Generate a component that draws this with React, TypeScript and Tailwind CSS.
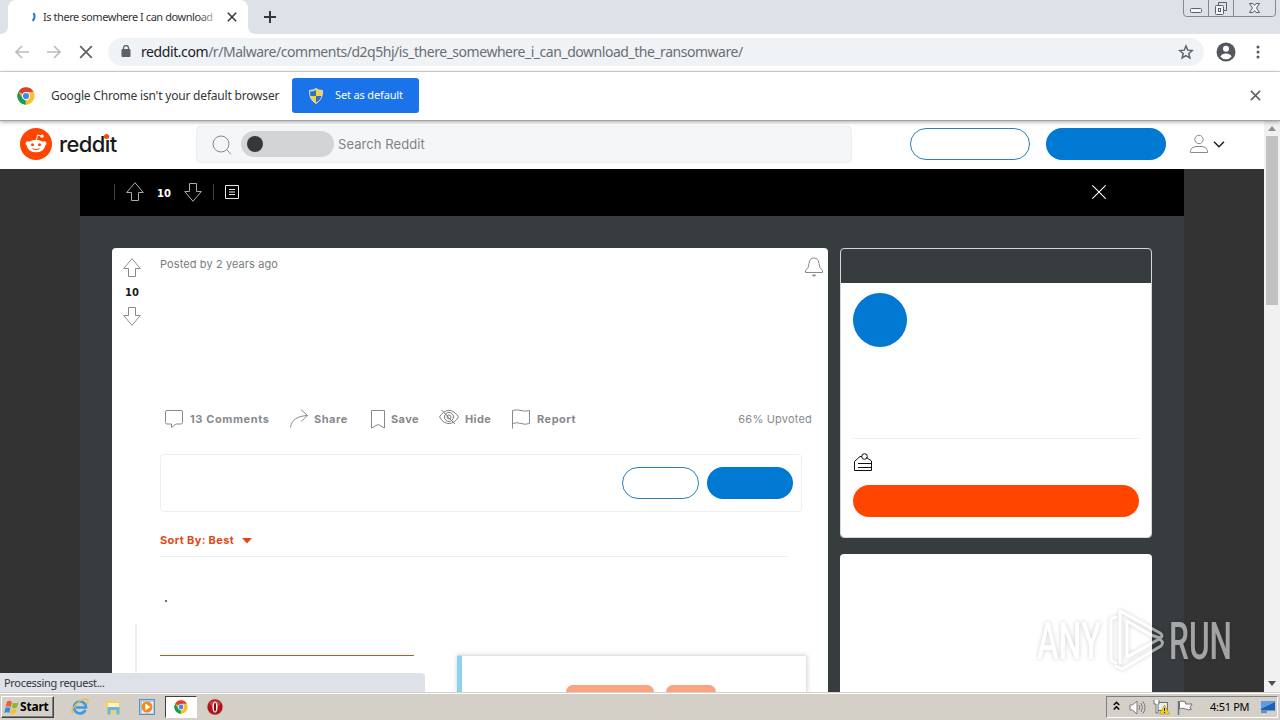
import React from 'react';

type IconProps = { className?: string };

const actions = [
  { id: 'comments', label: '13 Comments', box: 'w-[125px]', gap: 'gap-[7px]', text: 'tracking-[0.6px]', icon: <CommentIcon /> },
  { id: 'share', label: 'Share', box: 'w-[81px]', gap: 'gap-[6px]', text: 'tracking-[0.5px]', icon: <ShareIcon /> },
  { id: 'save', label: 'Save', box: 'w-[68px]', gap: 'gap-[6px]', text: 'tracking-[0.4px]', icon: <SaveIcon /> },
  { id: 'hide', label: 'Hide', box: 'w-[73px]', gap: 'gap-[6px]', text: 'tracking-[0.4px]', icon: <HideIcon /> },
  { id: 'report', label: 'Report', box: 'w-[80px]', gap: 'gap-[7px]', text: 'tracking-[0.5px]', icon: <FlagIcon /> },
];

function CommentIcon() {
  return (
    <svg className="w-[18px] h-[20px] shrink-0" viewBox="0 0 18 20" fill="none" stroke="#878a8c">
      <path d="M2 1.5h14q1.500 0 1.500 1.500v10.500q0 1.500-1.500 1.500h-5l-4.500 3.500v-3.500H2Q.5 15 .5 13.500V3Q.5 1.500 2 1.500z" />
    </svg>
  );
}

function ShareIcon() {
  return (
    <svg className="w-[18px] h-[20px] shrink-0" viewBox="0 0 18 20" fill="none" stroke="#878a8c">
      <path d="M.5 18.500C1.500 10.500 8 7 17.500 6.500M11 .5l6.500 6-6.500 6" />
    </svg>
  );
}

function SaveIcon() {
  return (
    <svg className="w-[14px] h-[20px] shrink-0" viewBox="0 0 14 20" fill="none" stroke="#878a8c">
      <path d="M.5 1.500h13v17.500L7 15.500.5 19z" />
    </svg>
  );
}

function HideIcon() {
  return (
    <svg className="w-[20px] h-[18px] shrink-0 mb-1" viewBox="0 0 20 18" fill="none" stroke="#7c7f81">
      <path d="M.5 9Q4.500 2.500 10 2.500T19.500 9Q15.500 15.500 10 15.500T.5 9z" />
      <circle cx="10" cy="9" r="4.500" />
      <circle cx="10" cy="9" r="2" />
      <path d="M2.500 2L16 16" />
    </svg>
  );
}

function FlagIcon() {
  return (
    <svg className="w-[18px] h-[20px] shrink-0" viewBox="0 0 18 20" fill="none" stroke="#878a8c">
      <path d="M.5 19.500V1.500Q5 .2 9 1.500t8.500 0v13Q13 16 9 14.500t-8.500 0" />
    </svg>
  );
}

function ArrowIcon({ className = '' }: IconProps) {
  return (
    <svg className={`w-[18px] h-[20px] shrink-0 ${className}`} viewBox="0 0 18 20" fill="none" stroke="currentColor">
      <path d="M9 .7L.7 10.500h4.800v8h7v-8h4.800z" />
    </svg>
  );
}

function CloseIcon({ className = '' }: IconProps) {
  return (
    <svg className={className} viewBox="0 0 12 12" fill="none" stroke="currentColor">
      <path d="M1 1l10 10M11 1L1 11" />
    </svg>
  );
}

function ChromeLogo({ className = '' }: IconProps) {
  return (
    <svg className={className} viewBox="0 0 48 48">
      <circle cx="24" cy="24" r="23" fill="#fbc02d" />
      <path d="M24 24L4.080 12.500A23 23 0 0 1 43.920 12.500L24 14z" fill="#db3f32" />
      <path d="M4.080 12.500L15 30 24 34.500 24 47A23 23 0 0 1 4.080 12.500z" fill="#159c58" />
      <path d="M24 13h19.900v1H24zM33 29L24 47l-2-12z" fill="#fbc02d" />
      <circle cx="24" cy="24" r="10.500" fill="#fff" />
      <circle cx="24" cy="24" r="8.200" fill="#4285f4" />
    </svg>
  );
}

function TabStrip() {
  return (
    <div className="flex h-[34px] shrink-0 items-stretch bg-[#dee1e8] pl-[8px]">
      <div className="relative flex w-[240px] items-center rounded-t-[8px] bg-white pl-[23px]">
        <svg className="w-[6px] h-[10px]" viewBox="0 0 6 10" fill="none" stroke="#2f6fd6" strokeWidth="2">
          <path d="M2.500 1q2.500 3.500-.8 8" />
        </svg>
        <span className="ml-[6px] w-[174px] whitespace-nowrap font-['Noto_Sans'] text-[11px] tracking-[-0.44px] text-[#33363a]">
          Is there somewhere I can download
        </span>
        <div className="absolute left-[190px] top-2 h-5 w-[20px] bg-gradient-to-r from-white/0 to-white/80" />
        <CloseIcon className="ml-[10px] h-[10px] w-[10px] stroke-[1.800] text-[#33363a]" />
        {/* flared tab feet */}
        <svg className="absolute -left-[8px] bottom-0 h-2 w-2" viewBox="0 0 8 8"><path d="M8 0v8H0q8 0 8-8z" fill="#fff" /></svg>
        <svg className="absolute -right-[8px] bottom-0 h-2 w-2" viewBox="0 0 8 8"><path d="M0 0v8h8Q0 8 0 0z" fill="#fff" /></svg>
      </div>
      <svg className="ml-[16px] mt-[11px] h-[12px] w-[12px]" viewBox="0 0 12 12" stroke="#33363a" strokeWidth="2">
        <path d="M6 0v12M0 6h12" />
      </svg>
      <svg className="ml-auto mr-[4px] h-[18px] w-[93px]" viewBox="0 0 93 18" fill="none" stroke="#85898f">
        <path d="M.5 0v13q0 3.500 3 3.500h86q3 0 3-3.500V0M25.500 0v16M50.500 0v16" />
        <g stroke="#5b5f66">
          <rect x="7.500" y="8.500" width="11" height="4" rx="1" fill="#f4f5f7" />
          <path d="M35.500 5.500v-3h8v8h-3" />
          <rect x="32.500" y="5.500" width="8" height="9" rx="1" fill="#f4f5f7" />
          <rect x="35.500" y="8.500" width="2" height="3" />
          <path d="M66.500 3.500h3.500l1.500 2 1.500-2h3.500l-3 4.500 3 4.500h-3.500l-1.500-2-1.500 2h-3.500l3-4.500z" fill="#f4f5f7" />
        </g>
      </svg>
    </div>
  );
}

function Toolbar() {
  return (
    <div className="flex h-[38px] shrink-0 items-center border-b border-[#d7d8da] bg-white pl-[15px]">
      <svg className="-mt-[2px] h-[14px] w-[14px]" viewBox="0 0 14 14" fill="none" stroke="#b9bbbe" strokeWidth="1.600"><path d="M14 7H1M7 1L1 7l6 6" /></svg>
      <svg className="-mt-[2px] ml-[18px] h-[14px] w-[14px]" viewBox="0 0 14 14" fill="none" stroke="#b9bbbe" strokeWidth="1.600"><path d="M0 7h13M7 1l6 6-6 6" /></svg>
      <CloseIcon className="-mt-[2px] ml-[18px] h-[14px] w-[14px] stroke-[1.500] text-[#5f6368]" />
      <div className="-mt-[1px] ml-[15px] flex h-[28px] w-[1096px] items-center rounded-full bg-[#f0f3f6] pl-[13px] pr-[10px]">
        <svg className="-mt-[2px] h-[12px] w-[10px]" viewBox="0 0 10 12">
          <rect x="0.500" y="4" width="9" height="8" rx="1" fill="#5f6368" />
          <path d="M2.500 5V3a2.500 2.500 0 0 1 5 0v2" fill="none" stroke="#5f6368" strokeWidth="1.300" />
        </svg>
        <span className="-mt-px ml-[10px] whitespace-nowrap font-['Noto_Sans'] text-[14px] tracking-[-0.47px] text-[#6a6e73]">
          <span className="tracking-[-0.42px] text-[#202124]">reddit.com</span>/r/Malware/comments/d2q5hj/is_there_somewhere_i_can_download_the_ransomware/
        </span>
        <svg className="-mt-px ml-auto h-[16px] w-[16px]" viewBox="0 0 24 24" fill="none" stroke="#5f6368" strokeWidth="2.200">
          <path d="M12 3l2.600 6.200 6.700.6-5.100 4.400 1.600 6.600L12 17.300l-5.800 3.500 1.600-6.600-5.100-4.400 6.700-.6z" />
        </svg>
      </div>
      <svg className="-mt-[2px] ml-[12px] h-[20px] w-[20px]" viewBox="0 0 20 20">
        <circle cx="10" cy="10" r="9.500" fill="#54585e" />
        <circle cx="10" cy="6.800" r="3" fill="#fff" />
        <path d="M4.300 14.500Q6 11.500 10 11.500t5.700 3Q13.500 17.300 10 17.300t-5.700-2.800z" fill="#fff" />
      </svg>
      <svg className="-mt-px ml-[20px] h-[14px] w-[4px]" viewBox="0 0 4 14" fill="#54585e">
        <circle cx="2" cy="2" r="1.500" /><circle cx="2" cy="7" r="1.500" /><circle cx="2" cy="12" r="1.500" />
      </svg>
    </div>
  );
}

function InfoBar() {
  return (
    <div className="relative z-10 flex h-[49px] shrink-0 items-center border-b border-[#a3a3a3] bg-white pb-px pl-[17px] pr-[19px] shadow-[0_1px_4px_rgba(0,0,0,0.35)]">
      <ChromeLogo className="h-[18px] w-[18px]" />
      <span className="ml-[16px] w-[229px] whitespace-nowrap font-['Noto_Sans'] text-[12px] tracking-[-0.19px] text-[#33363a]">
        Google Chrome isn't your default browser
      </span>
      <button className="ml-[12px] flex h-[35px] w-[127px] items-center rounded-[3px] bg-[#1a73e8] pl-[17px] font-['Noto_Sans'] text-[11px] tracking-[-0.15px] text-white">
        <svg className="h-[16px] w-[14px]" viewBox="0 0 14 16">
          <path d="M7 .5Q9.500 2.500 13.500 2.500 14 11.500 7 15.500 0 11.500.5 2.500 4.500 2.500 7 .5z" fill="#f5d33c" stroke="#d9dde2" />
          <path d="M7 2v6H1.500q-.5-2-.3-4.500Q4.500 3.500 7 2zM7 8h5.500Q11.500 12 7 14.500z" fill="#2874c9" />
        </svg>
        <span className="ml-[12px] whitespace-nowrap">Set as default</span>
      </button>
      <CloseIcon className="ml-auto h-[11px] w-[11px] stroke-[1.800] text-[#62666b]" />
    </div>
  );
}

function SiteHeader() {
  return (
    <div className="flex h-[48px] shrink-0 items-center bg-white pl-[20px]">
      <svg className="-mt-[2px] h-[32px] w-[32px]" viewBox="0 0 32 32">
        <circle cx="16" cy="16" r="16" fill="#ff4500" />
        <path d="M16.500 12l1-5 4 1" fill="none" stroke="#fff" />
        <circle cx="22" cy="8.200" r="1.600" fill="#fff" />
        <circle cx="7.800" cy="15.500" r="2.200" fill="#fff" />
        <circle cx="24.200" cy="15.500" r="2.200" fill="#fff" />
        <ellipse cx="16" cy="18" rx="9" ry="6.300" fill="#fff" />
        <circle cx="12.500" cy="16.800" r="1.500" fill="#ff4500" />
        <circle cx="19.500" cy="16.800" r="1.500" fill="#ff4500" />
        <path d="M12.500 20.700q3.500 2 7 0" fill="none" stroke="#ff4500" />
      </svg>
      <div className="relative -mt-[2px] ml-[7px] w-[58px] whitespace-nowrap font-[Inter] text-[22px] font-medium leading-[28px] tracking-[-0.6px] text-[#1a1a1b]">
        reddit
        <div className="absolute left-[44.500px] top-[4px] h-[5px] w-[5px] rounded-full bg-[#ff4500]" />
      </div>
      <div className="-mt-[2px] ml-[79px] flex h-[37px] w-[656px] items-center rounded-[4px] border border-[#edeff1] bg-[#f4f6f8] pl-[15px]">
        <svg className="mt-[2px] h-[20px] w-[20px]" viewBox="0 0 20 20" fill="none" stroke="#878a8c">
          <circle cx="9" cy="9" r="8" /><path d="M14.800 14.800l4.200 4.500" />
        </svg>
        <div className="ml-[9px] flex h-[26px] w-[93px] items-center rounded-full bg-[#d3d4d5] pl-[6px]">
          <div className="h-[16px] w-[16px] rounded-full bg-[#373737]" />
        </div>
        <span className="ml-[4px] mt-px whitespace-nowrap font-[Inter] text-[13px] tracking-[0.08px] text-[#7f8385]">Search Reddit</span>
      </div>
      <div className="-mt-[2px] ml-[58px] h-[32px] w-[120px] rounded-full border border-[#2b80bd]" />
      <div className="-mt-[2px] ml-[16px] h-[32px] w-[120px] rounded-full bg-[#0079d3]" />
      <svg className="-mt-[2px] ml-[24px] h-[20px] w-[18px]" viewBox="0 0 18 20" fill="none" stroke="#878a8c">
        <circle cx="9" cy="5.500" r="4.200" />
        <path d="M.5 18.500v-2Q1.500 12.500 6 12.500h6q4.500 0 5.500 4v2z" />
      </svg>
      <svg className="-mt-[2px] ml-[5px] h-[7px] w-[12px]" viewBox="0 0 12 7" fill="none" stroke="#1a1a1b" strokeWidth="1.400"><path d="M1 .8l5 5 5-5" /></svg>
    </div>
  );
}

function PostBar() {
  return (
    <div className="flex h-[47px] items-center bg-black pb-px pl-[34px] text-[#a9abad]">
      <div className="h-[16px] w-px bg-[#3c3e40]" />
      <ArrowIcon className="ml-[11px]" />
      <span className="ml-[13px] mt-[2px] w-[15px] font-['DejaVu_Sans'] text-[10px] font-bold text-white">10</span>
      <ArrowIcon className="ml-[12px] rotate-180" />
      <div className="ml-[11px] h-[16px] w-px bg-[#3c3e40]" />
      <svg className="ml-[11px] h-[14px] w-[14px]" viewBox="0 0 14 14" fill="none" stroke="#e8e8e8">
        <path d="M.5.5h13v13H.5zM4 4.500h6M4 7h6M4 9.500h6" />
      </svg>
      <CloseIcon className="ml-auto mr-[77px] h-[16px] w-[16px] stroke-[0.800] text-white" />
    </div>
  );
}

function Post() {
  return (
    <div className="flex h-[460px] w-[716px] rounded-t-[4px] bg-white">
      <div className="flex w-[48px] flex-col pl-[11px] pt-[10px] text-[#878a8c]">
        <ArrowIcon />
        <span className="mt-[8px] h-[14px] w-[18px] text-center font-['DejaVu_Sans'] text-[10px] font-bold leading-[14px] text-[#1a1a1b]">10</span>
        <ArrowIcon className="mt-[6px] rotate-180" />
        <div className="ml-[12px] mt-[298px] h-[90px] w-[2px] bg-[#edeff1]" />
      </div>
      <div className="flex flex-1 flex-col">
        <div className="flex h-[39px] shrink-0 items-center justify-between pr-[5px] font-[Inter] text-[11px] tracking-[0.1px] text-[#787c7e]">
          <span className="-mt-[6px]">Posted by 2 years ago</span>
          <svg className="-mt-[2px] h-[20px] w-[18px]" viewBox="0 0 18 20" fill="none" stroke="#878a8c">
            <path d="M.5 15.500v-2Q4 11 4 6.500 4.500 1 9 1t5 5.500q0 4.500 3.500 7v2z" />
            <path d="M7.500 18h3L9 19.500z" fill="#878a8c" />
          </svg>
        </div>
        <div className="mt-[122px] flex h-[20px] shrink-0 items-center pl-[5px] pr-[16px] font-[Inter] text-[11px] font-bold text-[#878a8c]">
          {actions.map((action) => (
            <div key={action.id} className={`flex shrink-0 items-center ${action.box} ${action.gap}`}>
              {action.icon}
              <span className={`whitespace-nowrap ${action.text}`}>{action.label}</span>
            </div>
          ))}
          <span className="ml-auto whitespace-nowrap font-normal tracking-[0.2px]">66% Upvoted</span>
        </div>
        <div className="mt-[25px] flex h-[58px] w-[642px] shrink-0 items-center justify-end gap-2 rounded-[4px] border border-[#edeff1] pr-[8px]">
          <div className="h-[32px] w-[77px] rounded-full border border-[#2b80bd]" />
          <div className="h-[32px] w-[86px] rounded-full bg-[#0079d3]" />
        </div>
        <div className="mt-[16px] flex h-[29px] w-[628px] shrink-0 border-b border-[#edeff1] font-[Inter] text-[11px] font-bold leading-[24px] text-[#dd4a1a]">
          <span className="w-[82px] whitespace-nowrap tracking-[0.35px]">Sort By: Best</span>
          <svg className="mt-[10px] h-[6px] w-[10px]" viewBox="0 0 10 6"><path d="M0 0h10L5 5.500z" fill="#dd4a1a" /></svg>
        </div>
        <div className="ml-[5px] mt-[43px] h-[2px] w-[2px] shrink-0 bg-[#6d7072]" />
        <div className="mt-[53px] flex shrink-0 items-start">
          <div className="w-[254px] border-t border-[#cf4f2a]" />
          <div className="ml-[43px] flex h-[60px] w-[350px] gap-[12px] rounded-[2px] border border-l-[5px] border-[#e2e2e2] border-l-[#8dd0f0] pl-[104px] pt-[29px] shadow-[0_0_5px_rgba(0,0,0,0.18)]">
            <div className="h-[30px] w-[88px] rounded-[7px] bg-[#fba283]" />
            <div className="h-[30px] w-[50px] rounded-[7px] bg-[#fba283]" />
          </div>
        </div>
      </div>
    </div>
  );
}

function Sidebar() {
  return (
    <div className="flex w-[312px] flex-col gap-4">
      <div className="flex h-[290px] flex-col rounded-[4px] border border-[#d3d6d8]">
        <div className="h-[34px] shrink-0" />
        <div className="flex flex-1 flex-col rounded-b-[3px] bg-white px-[12px] pt-[10px]">
          <div className="h-[54px] w-[54px] rounded-full bg-[#0079d3]" />
          <div className="mt-[91px] h-px bg-[#edeff1]" />
          <svg className="ml-px mt-[13px] h-[20px] w-[19px]" viewBox="0 0 19 20" fill="none" stroke="#111">
            <path d="M.5 18.500V9.500l5.500-5h2M12.500 5.500l5 3.500v9.500H.5M4 11.500h13.500M4 15.500h13.500" />
            <circle cx="10.500" cy="4.500" r="2.800" />
          </svg>
          <div className="mt-[13px] h-[32px] rounded-full bg-[#ff4500]" />
        </div>
      </div>
      <div className="h-[170px] rounded-t-[4px] bg-white" />
    </div>
  );
}

function Scrollbar() {
  return (
    <div className="flex w-[16px] shrink-0 flex-col items-center bg-[#f1f1f1]">
      <svg className="mt-[5px] h-[5px] w-[8px] shrink-0" viewBox="0 0 8 5"><path d="M4 0l4 5H0z" fill="#8d8d8d" /></svg>
      <div className="mt-[5px] h-[169px] w-[12px] shrink-0 bg-[#c1c1c1]" />
      <svg className="mb-[6px] mt-auto h-[5px] w-[8px] shrink-0" viewBox="0 0 8 5"><path d="M0 0h8L4 5z" fill="#505050" /></svg>
    </div>
  );
}

function Watermark() {
  return (
    <svg className="absolute left-[1030px] top-[600px] z-20 h-[80px] w-[220px] drop-shadow-[0_0_2px_rgba(0,0,0,0.35)]" viewBox="0 0 220 80" opacity="0.55">
      <g fill="#fff" fontFamily="Roboto, sans-serif" fontSize="51" fontWeight="500">
        <text x="7" y="59" textLength="64" lengthAdjust="spacingAndGlyphs">ANY</text>
        <text x="139" y="59" textLength="63" lengthAdjust="spacingAndGlyphs">RUN</text>
      </g>
      <g fill="none" stroke="#fff" strokeWidth="3" strokeLinejoin="round" strokeLinecap="round">
        <path d="M86 17l-5 2v41l5 3" />
        <path d="M90 63V11l40 22q4 3 0 5l-9-3-24-14v36l20-11" />
        <path d="M97 57l32-18q6 3 2 7L92 69l-6-3" />
      </g>
    </svg>
  );
}

function Taskbar() {
  return (
    <div className="relative z-10 flex h-[28px] shrink-0 items-center border-t border-[#d4d0c8] bg-[#d4d0c8] pl-px pt-px shadow-[inset_0_1px_0_#fff]">
      <div className="flex h-[22px] w-[53px] items-center border border-b-[#404040] border-l-white border-r-[#404040] border-t-white pl-[2px] shadow-[inset_-1px_-1px_0_#808080]">
        <svg className="h-[15px] w-[15px]" viewBox="0 0 15 15">
          <path d="M3 1.500Q5.500 0 8 2L6.800 7Q4 5.500 1.500 7z" fill="#e8622a" />
          <path d="M9 2.500Q11.500 4 14.500 2.500L13 7.500Q10.500 9 7.800 7.500z" fill="#83b839" />
          <path d="M1.300 8Q4 6.500 6.500 8L5.300 13Q3 11.500.2 13z" fill="#3b8ad8" />
          <path d="M7.500 8.500Q10 10 12.800 8.500L11.500 13Q9 15 6.200 13.500z" fill="#f5c12e" />
        </svg>
        <span className="ml-px font-['Noto_Sans'] text-[12px] font-bold tracking-[-0.2px] text-black">Start</span>
      </div>
      <svg className="ml-[17px] h-[18px] w-[18px]" viewBox="0 0 18 18" fill="none">
        <path d="M14.500 12Q12.500 15.500 9 15.500a6 6 0 1 1 6-6H5" stroke="#3b9be0" strokeWidth="2.600" />
        <path d="M1.500 15.500Q-.5 12 5.500 6T16.500 1.500Q18 3 16 6" stroke="#e9bd3f" strokeWidth="1.300" />
      </svg>
      <svg className="ml-[16px] h-[16px] w-[17px]" viewBox="0 0 17 16">
        <path d="M1 1h5l1 1.500h8V14H1z" fill="#f1cf69" />
        <path d="M3 4h11v5H3z" fill="#fff3bc" />
        <path d="M2.500 15.500V9q0-1 1-1h10q1 0 1 1v6.500H11.500V11h-6v4.500z" fill="#68b5df" />
      </svg>
      <svg className="ml-[17px] h-[16px] w-[16px]" viewBox="0 0 16 16">
        <rect x=".5" y=".5" width="15" height="15" fill="#a9cdeb" stroke="#5b91bf" />
        <rect x="3" y="3" width="11" height="11" fill="#e9f3fa" />
        <circle cx="8" cy="8" r="5.500" fill="#f28a18" /><path d="M6.300 4.500L11.500 8l-5.200 3.500z" fill="#fff" />
      </svg>
      <div className="ml-[10px] flex h-[22px] w-[32px] items-center justify-center border border-b-white border-l-[#404040] border-r-white border-t-[#404040] bg-white">
        <ChromeLogo className="h-[14px] w-[14px]" />
      </div>
      <svg className="ml-[10px] h-[16px] w-[16px]" viewBox="0 0 16 16">
        <circle cx="8" cy="8" r="7.700" fill="#b3131b" />
        <ellipse cx="8" cy="4.500" rx="5.500" ry="3" fill="#e06a6a" opacity=".5" />
        <ellipse cx="8" cy="8" rx="2.600" ry="5.500" fill="#fff" /><ellipse cx="8" cy="8" rx="1.100" ry="4.500" fill="#7d0c10" />
      </svg>
      <div className="ml-auto mr-[2px] flex h-[22px] w-[172px] items-center border border-b-white border-l-[#808080] border-r-white border-t-[#808080] pl-[6px]">
        <svg className="-mt-[2px] h-[10px] w-[7px]" viewBox="0 0 7 10" fill="none" stroke="#000" strokeWidth="1.500"><path d="M.8 4l2.700-2.700L6.200 4M.8 8.500l2.700-2.700 2.700 2.700" /></svg>
        <svg className="ml-[9px] h-[15px] w-[17px]" viewBox="0 0 17 15" fill="none" stroke="#77797c">
          <path d="M1 5h2.500L8 1v13l-4.500-4H1z" fill="#fff" /><path d="M10 5q1.500 2.500 0 5M12 3q3 4.500 0 9M14 1.500q4 6 0 12" />
        </svg>
        <svg className="ml-[7px] h-[16px] w-[17px]" viewBox="0 0 17 16">
          <rect x="4.500" y="3.500" width="10" height="8" fill="#e7edf1" stroke="#6f7275" />
          <path d="M1 1v4h2v9h2V5h1V1" fill="#fff" stroke="#6f7275" />
          <path d="M11.500 6l5 9h-10z" fill="#f6cf23" stroke="#b48f0d" strokeWidth=".6" /><path d="M11.500 9v3M11.500 13v1" stroke="#222" />
        </svg>
        <svg className="ml-[7px] h-[15px] w-[16px]" viewBox="0 0 16 15" stroke="#707377">
          <path d="M2.500 1.500Q5 .5 8.500 2v2h6.500l-2 3.500 1.500 2Q11 10.500 8.500 9T2.500 9z" fill="#fff" /><path d="M1.500 1v14" strokeWidth="1.500" />
        </svg>
        <span className="ml-[17px] w-[50px] whitespace-nowrap font-['Noto_Sans'] text-[11px] tracking-[-0.3px] text-black">4:51 PM</span>
        <svg className="h-[14px] w-[17px]" viewBox="0 0 17 14">
          <rect x=".5" y="1" width="15" height="10" fill="#1e5fb5" stroke="#bfd0e0" />
          <path d="M1 2h14L1 9z" fill="#5d9de0" /><path d="M1 11h6v2H1z" fill="#6f8fac" />
        </svg>
      </div>
    </div>
  );
}

export default function App() {
  return (
    <div className="relative flex h-[720px] w-[1280px] flex-col overflow-hidden bg-white">
      <TabStrip />
      <Toolbar />
      <InfoBar />
      <div className="flex min-h-0 flex-1 overflow-hidden">
        <div className="flex min-w-0 flex-1 flex-col overflow-hidden bg-[#333333]">
          <SiteHeader />
          <div className="ml-[80px] w-[1104px] shrink-0 bg-[#373c3f]">
            <PostBar />
            <div className="flex gap-[12px] pl-[32px] pt-[32px]">
              <Post />
              <Sidebar />
            </div>
          </div>
        </div>
        <Scrollbar />
      </div>
      <Taskbar />
      {/* Status bubble */}
      <div className="absolute bottom-[28px] left-0 h-[19px] w-[425px] rounded-tr-[4px] bg-[#dee1e8] pl-[4px] font-['Noto_Sans'] text-[11px] leading-[19px] tracking-[-0.32px] text-[#33363a]">
        Processing request...
      </div>
      <Watermark />
    </div>
  );
}
